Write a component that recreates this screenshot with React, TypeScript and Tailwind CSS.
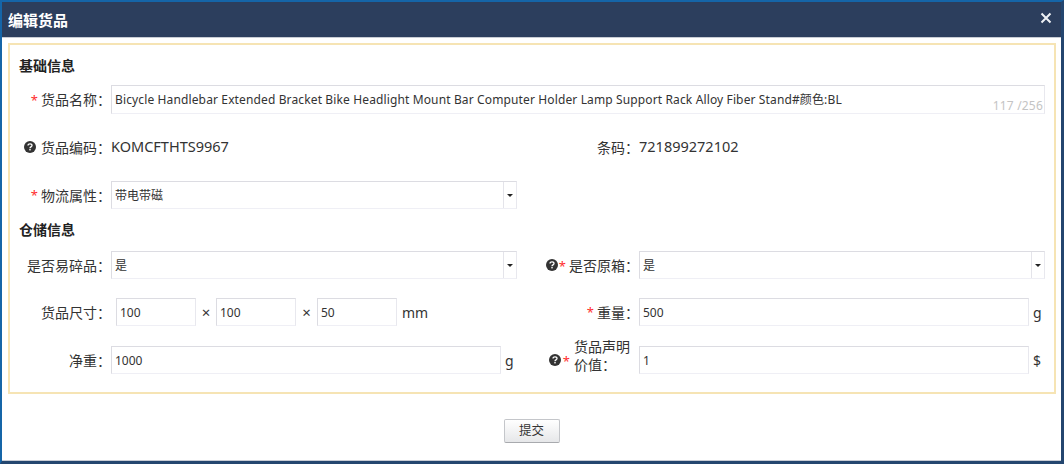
import { ReactNode } from 'react';

const font = 'font-["Noto_Sans","Noto_Sans_CJK_SC",sans-serif]';
const boxClass =
  'h-7 border border-[#dcdce2] border-b-[#efeff5] border-r-[#e8e8ee] bg-white text-[12px] text-[#333] outline-none';

function Help() {
  return (
    <svg width="12" height="12" viewBox="0 0 12 12" className="shrink-0">
      <circle cx="6" cy="6" r="6" fill="#333" />
      <path d="M4 4.600C4 3.500 4.900 2.900 6 2.900s2 .6 2 1.600c0 1.500-2 1.300-2 2.700" fill="none" stroke="#fff" strokeWidth="1.300" />
      <rect x="5.300" y="8" width="1.400" height="1.400" fill="#fff" />
    </svg>
  );
}

function Star() {
  return <span className="text-[13px] leading-[14px] text-[#ff2d2d]">*</span>;
}

function Label({ children, className }: { children: ReactNode; className: string }) {
  return (
    <div className={`flex shrink-0 items-center justify-end text-[14px] text-[#333] ${className}`}>
      {children}
    </div>
  );
}

function Select({ value }: { value: string }) {
  return (
    <div className={`flex w-[406px] shrink-0 items-center ${boxClass}`}>
      <span className="flex-1 pt-px pl-[3px]">{value}</span>
      <span className="flex h-full w-[13px] items-center justify-center border-l border-[#e4e4ea]">
        <span className="h-0 w-0 border-x-[3px] border-t-[3px] border-x-transparent border-t-[#222]" />
      </span>
    </div>
  );
}

function Input({ value, width }: { value: string; width: string }) {
  return <input readOnly value={value} className={`${boxClass} ${width} shrink-0 px-[3px]`} />;
}

export default function App() {
  return (
    <div className={`flex h-[464px] w-[1064px] flex-col overflow-hidden border-t-2 border-r-[3px] border-b-[3px] border-l-2 border-t-[#1565a8] border-r-[#24466f] border-b-[#24466f] border-l-[#1565a8] bg-white ${font}`}>
      <div className="flex h-[36px] shrink-0 items-center justify-between border-b border-[#c8ccd4] bg-[#2c3e5d] pl-[6px] pr-[9px]">
        <span className="pt-px text-[15px] font-bold text-white">编辑货品</span>
        <svg width="12" height="12" viewBox="0 0 12 12" className="mb-[4px]">
          <path d="M1.500 1.500l9 9M10.500 1.500l-9 9" stroke="#eef1f5" strokeWidth="2" />
        </svg>
      </div>

      <div className="mt-[5px] mr-[5px] ml-[6px] flex h-[351px] shrink-0 flex-col border-2 border-[#f6e4b4] px-[9px]">
        <h3 className="mt-[11px] h-[20px] text-[14px] leading-[20px] font-bold text-[#222]">基础信息</h3>

        <div className="mt-[9px] flex items-center">
          <Label className="w-[92px] gap-[3px]"><Star />货品名称：</Label>
          <div className={`relative flex h-[29px] w-[934px] items-center pl-[3px] tracking-[0.13px] ${boxClass}`}>
            Bicycle Handlebar Extended Bracket Bike Headlight Mount Bar Computer Holder Lamp Support Rack Alloy Fiber Stand#颜色:BL
            <span className="absolute right-[1px] bottom-0 text-[12px] leading-[14px] tracking-[0.2px] text-[#c4c4c4]">117 /256</span>
          </div>
        </div>

        <div className="mt-[19px] flex h-[28px] items-center">
          <Label className="w-[92px] gap-[5px]"><Help />货品编码：</Label>
          <span className="text-[14.500px] text-[#333]">KOMCFTHTS9967</span>
          <span className="ml-auto text-[14px] text-[#333]">条码：</span>
          <span className="w-[406px] text-[14.500px] text-[#333]">721899272102</span>
        </div>

        <div className="mt-[20px] flex items-center">
          <Label className="w-[92px] gap-[3px]"><Star />物流属性：</Label>
          <Select value="带电带磁" />
        </div>

        <h3 className="mt-[11px] h-[20px] text-[14px] leading-[20px] font-bold text-[#222]">仓储信息</h3>

        <div className="mt-[11px] flex items-center">
          <Label className="w-[92px]">是否易碎品：</Label>
          <Select value="是" />
          <Label className="w-[122px]"><Help /><span className="ml-[1px]"><Star /></span><span className="ml-[3px]">是否原箱：</span></Label>
          <Select value="是" />
        </div>

        <div className="mt-[19px] flex items-center">
          <Label className="w-[92px]">货品尺寸：</Label>
          <Input value="100" width="ml-[5px] w-[80px]" />
          <span className="w-[20px] text-center text-[15px] text-[#333]">×</span>
          <Input value="100" width="w-[80px]" />
          <span className="w-[21px] text-center text-[15px] text-[#333]">×</span>
          <Input value="50" width="w-[80px]" />
          <span className="ml-[5px] text-[14px] text-[#333]">mm</span>
          <Label className="ml-auto gap-[3px]"><Star />重量：</Label>
          <Input value="500" width="w-[390px]" />
          <span className="ml-[4px] w-[12px] text-[14px] text-[#333]">g</span>
        </div>

        <div className="mt-[20px] flex items-center">
          <Label className="w-[92px]">净重：</Label>
          <Input value="1000" width="w-[390px]" />
          <span className="ml-[4px] w-[17px] text-[14px] text-[#333]">g</span>
          <div className="flex w-[117px] shrink-0 items-center justify-end pr-[8px]">
            <Help /><span className="ml-[2px]"><Star /></span>
            <span className="-mt-[8px] ml-[4px] w-[57px] text-[14px] leading-[18px] text-[#333]">货品声明价值：</span>
          </div>
          <Input value="1" width="w-[390px]" />
          <span className="ml-[4px] text-[14px] text-[#333]">$</span>
        </div>
      </div>

      <div className="flex flex-1 justify-center border-b border-[#c8ccd4] pt-[25px]">
        <button className="h-[24px] w-[56px] rounded-[2px] border border-[#c4c6ca] border-b-[#a8aaae] bg-gradient-to-b from-white to-[#e6e7e9] text-[12.500px] text-[#333]">
          提交
        </button>
      </div>
    </div>
  );
}
